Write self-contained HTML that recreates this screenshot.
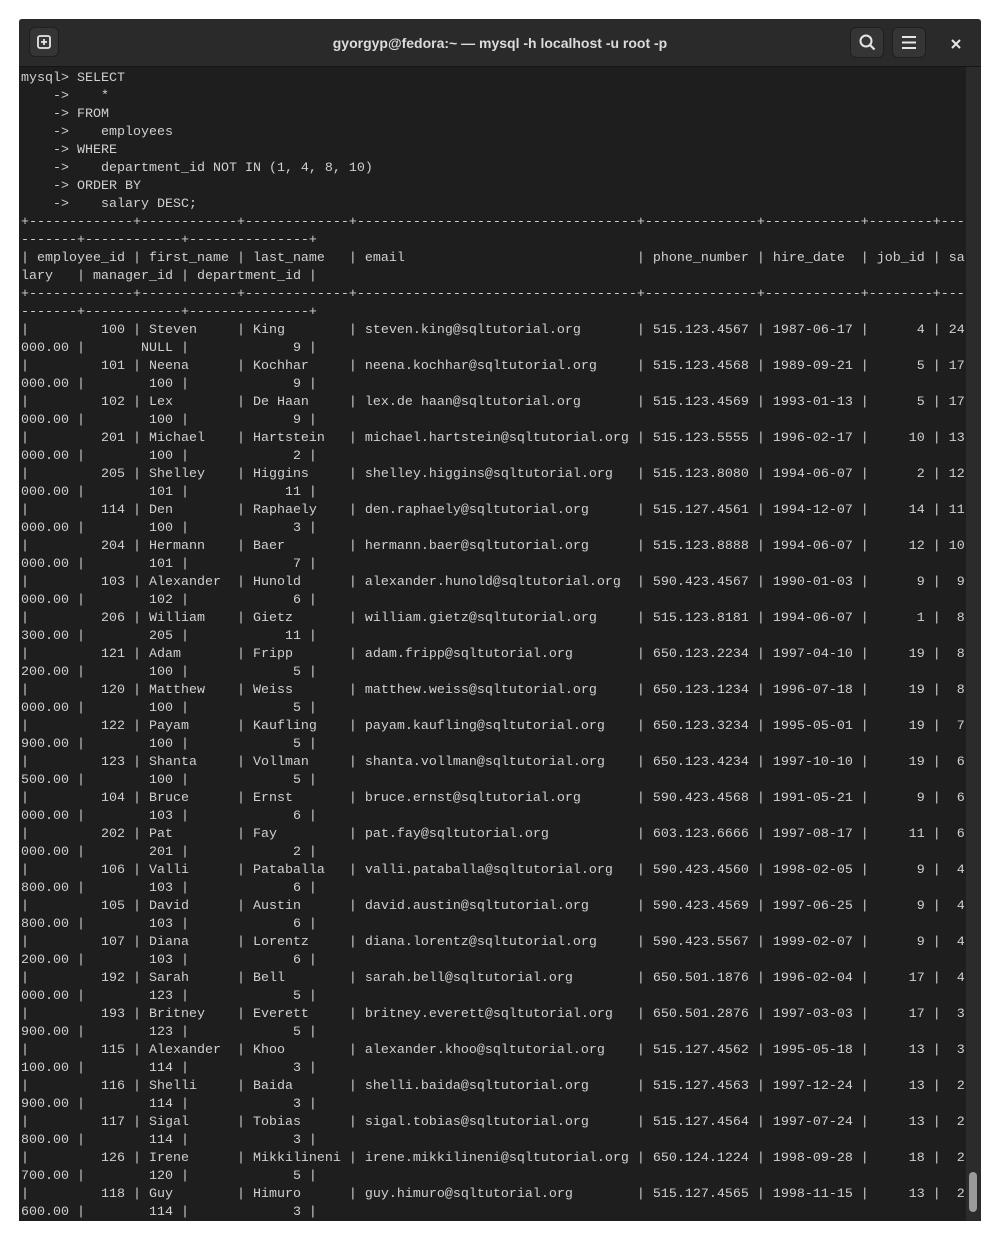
<!DOCTYPE html>
<html><head><meta charset="utf-8"><style>
html,body{margin:0;padding:0;background:#fff;width:1000px;height:1240px;overflow:hidden}
.win{position:absolute;left:19px;top:19px;width:962px;height:1202px;background:#1e1e1e;overflow:hidden;border-radius:3px 3px 0 0}
.tb{position:absolute;left:0;top:0;width:962px;height:47px;background:#2a2a2a;border-bottom:1px solid #151515}
.title{position:absolute;left:0;right:0;top:16px;text-align:center;color:#dcdcdc;font:bold 14px "Liberation Sans",sans-serif}
.btn{position:absolute;top:8px;width:34px;height:31px;background:#353535;border-radius:6px;border:1px solid #1f1f1f;box-sizing:border-box}
pre{position:absolute;left:2px;top:51px;margin:0;font:13.33px/18px "Liberation Mono",monospace;color:#d0d0d0;white-space:pre}
.sb{position:absolute;left:947px;top:48px;width:15px;height:1154px;background:#2b2b2b}
.th{position:absolute;left:950px;top:1153px;width:8px;height:40px;background:#9a9a9a;border-radius:4px}
</style></head><body>
<div class="win">
<div class="tb">
<div class="btn" style="left:10px;width:30px;height:30px"><svg width="28" height="28" viewBox="0 0 28 28"><rect x="8" y="8" width="12" height="12" rx="2" fill="none" stroke="#e6e6e6" stroke-width="1.8"/><path d="M14 11v6M11 14h6" stroke="#e6e6e6" stroke-width="1.8"/></svg></div>
<div class="title">gyorgyp@fedora:~ — mysql -h localhost -u root -p</div>
<div class="btn" style="left:831px"><svg width="32" height="29" viewBox="0 0 32 29"><circle cx="15" cy="13" r="5.5" fill="none" stroke="#e6e6e6" stroke-width="2"/><path d="M19 17l4.5 4.5" stroke="#e6e6e6" stroke-width="2.2"/></svg></div>
<div class="btn" style="left:873px"><svg width="32" height="29" viewBox="0 0 32 29"><path d="M9 9h14M9 14.5h14M9 20h14" stroke="#e6e6e6" stroke-width="2"/></svg></div>
<svg style="position:absolute;left:931px;top:19px" width="12" height="12" viewBox="0 0 12 12"><path d="M2 2l8 8M10 2l-8 8" stroke="#e6e6e6" stroke-width="2"/></svg>
</div>
<pre>mysql&gt; SELECT
    -&gt;    *
    -&gt; FROM
    -&gt;    employees
    -&gt; WHERE
    -&gt;    department_id NOT IN (1, 4, 8, 10)
    -&gt; ORDER BY
    -&gt;    salary DESC;
+-------------+------------+-------------+-----------------------------------+--------------+------------+--------+---
-------+------------+---------------+
| employee_id | first_name | last_name   | email                             | phone_number | hire_date  | job_id | sa
lary   | manager_id | department_id |
+-------------+------------+-------------+-----------------------------------+--------------+------------+--------+---
-------+------------+---------------+
|         100 | Steven     | King        | steven.king@sqltutorial.org       | 515.123.4567 | 1987-06-17 |      4 | 24
000.00 |       NULL |             9 |
|         101 | Neena      | Kochhar     | neena.kochhar@sqltutorial.org     | 515.123.4568 | 1989-09-21 |      5 | 17
000.00 |        100 |             9 |
|         102 | Lex        | De Haan     | lex.de haan@sqltutorial.org       | 515.123.4569 | 1993-01-13 |      5 | 17
000.00 |        100 |             9 |
|         201 | Michael    | Hartstein   | michael.hartstein@sqltutorial.org | 515.123.5555 | 1996-02-17 |     10 | 13
000.00 |        100 |             2 |
|         205 | Shelley    | Higgins     | shelley.higgins@sqltutorial.org   | 515.123.8080 | 1994-06-07 |      2 | 12
000.00 |        101 |            11 |
|         114 | Den        | Raphaely    | den.raphaely@sqltutorial.org      | 515.127.4561 | 1994-12-07 |     14 | 11
000.00 |        100 |             3 |
|         204 | Hermann    | Baer        | hermann.baer@sqltutorial.org      | 515.123.8888 | 1994-06-07 |     12 | 10
000.00 |        101 |             7 |
|         103 | Alexander  | Hunold      | alexander.hunold@sqltutorial.org  | 590.423.4567 | 1990-01-03 |      9 |  9
000.00 |        102 |             6 |
|         206 | William    | Gietz       | william.gietz@sqltutorial.org     | 515.123.8181 | 1994-06-07 |      1 |  8
300.00 |        205 |            11 |
|         121 | Adam       | Fripp       | adam.fripp@sqltutorial.org        | 650.123.2234 | 1997-04-10 |     19 |  8
200.00 |        100 |             5 |
|         120 | Matthew    | Weiss       | matthew.weiss@sqltutorial.org     | 650.123.1234 | 1996-07-18 |     19 |  8
000.00 |        100 |             5 |
|         122 | Payam      | Kaufling    | payam.kaufling@sqltutorial.org    | 650.123.3234 | 1995-05-01 |     19 |  7
900.00 |        100 |             5 |
|         123 | Shanta     | Vollman     | shanta.vollman@sqltutorial.org    | 650.123.4234 | 1997-10-10 |     19 |  6
500.00 |        100 |             5 |
|         104 | Bruce      | Ernst       | bruce.ernst@sqltutorial.org       | 590.423.4568 | 1991-05-21 |      9 |  6
000.00 |        103 |             6 |
|         202 | Pat        | Fay         | pat.fay@sqltutorial.org           | 603.123.6666 | 1997-08-17 |     11 |  6
000.00 |        201 |             2 |
|         106 | Valli      | Pataballa   | valli.pataballa@sqltutorial.org   | 590.423.4560 | 1998-02-05 |      9 |  4
800.00 |        103 |             6 |
|         105 | David      | Austin      | david.austin@sqltutorial.org      | 590.423.4569 | 1997-06-25 |      9 |  4
800.00 |        103 |             6 |
|         107 | Diana      | Lorentz     | diana.lorentz@sqltutorial.org     | 590.423.5567 | 1999-02-07 |      9 |  4
200.00 |        103 |             6 |
|         192 | Sarah      | Bell        | sarah.bell@sqltutorial.org        | 650.501.1876 | 1996-02-04 |     17 |  4
000.00 |        123 |             5 |
|         193 | Britney    | Everett     | britney.everett@sqltutorial.org   | 650.501.2876 | 1997-03-03 |     17 |  3
900.00 |        123 |             5 |
|         115 | Alexander  | Khoo        | alexander.khoo@sqltutorial.org    | 515.127.4562 | 1995-05-18 |     13 |  3
100.00 |        114 |             3 |
|         116 | Shelli     | Baida       | shelli.baida@sqltutorial.org      | 515.127.4563 | 1997-12-24 |     13 |  2
900.00 |        114 |             3 |
|         117 | Sigal      | Tobias      | sigal.tobias@sqltutorial.org      | 515.127.4564 | 1997-07-24 |     13 |  2
800.00 |        114 |             3 |
|         126 | Irene      | Mikkilineni | irene.mikkilineni@sqltutorial.org | 650.124.1224 | 1998-09-28 |     18 |  2
700.00 |        120 |             5 |
|         118 | Guy        | Himuro      | guy.himuro@sqltutorial.org        | 515.127.4565 | 1998-11-15 |     13 |  2
600.00 |        114 |             3 |</pre>
<div class="sb"></div><div class="th"></div>
</div>
</body></html>
